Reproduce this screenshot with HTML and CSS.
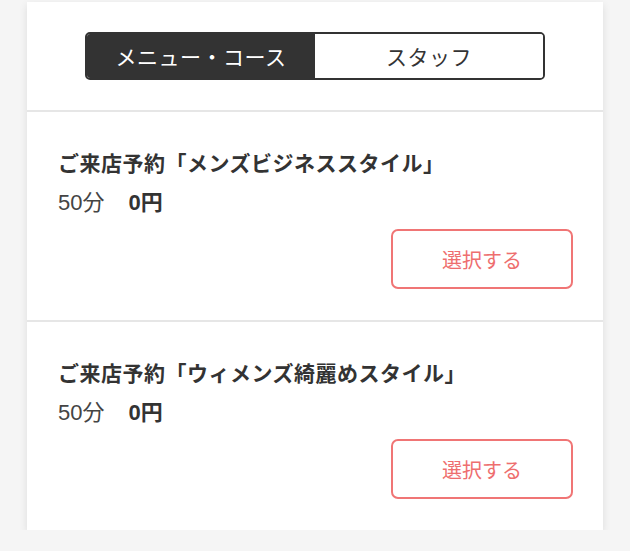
FILE: index.html
```html
<!DOCTYPE html>
<html lang="ja">
<head>
<meta charset="utf-8">
<link rel="stylesheet" href="styles.css">
</head>
<body>
<div class="card">
  <div class="tabs-wrap">
    <div class="tabs">
      <div class="tab active">メニュー・コース</div>
      <div class="tab">スタッフ</div>
    </div>
  </div>
  <div class="item">
    <div class="title">ご来店予約「メンズビジネススタイル」</div>
    <div class="price"><span class="time">50分</span><span class="yen">0円</span></div>
    <div class="actions"><button class="select">選択する</button></div>
  </div>
  <div class="item">
    <div class="title">ご来店予約「ウィメンズ綺麗めスタイル」</div>
    <div class="price"><span class="time">50分</span><span class="yen">0円</span></div>
    <div class="actions"><button class="select">選択する</button></div>
  </div>
</div>
</body>
</html>
```

FILE: styles.css
```css
* { box-sizing: border-box; }
html, body {
  margin: 0;
  padding: 0;
  background: #f5f5f5;
  font-family: "Noto Sans CJK JP", "Noto Sans", sans-serif;
  color: #333;
}
.card {
  width: 576px;
  margin: 2px 0 0 27px;
  background: #fff;
  box-shadow: 0 3px 8px rgba(0,0,0,0.10);
}
.tabs-wrap {
  padding: 30px 0 30px;
  display: flex;
  justify-content: center;
  border-bottom: 2px solid #e6e6e6;
}
.tabs {
  width: 460px;
  height: 48px;
  display: flex;
  border: 2px solid #333;
  border-radius: 5px;
  overflow: hidden;
}
.tab {
  flex: 1;
  display: flex;
  align-items: center;
  justify-content: center;
  font-size: 21px;
  letter-spacing: 0.5px;
  color: #333;
  background: #fff;
}
.tab.active {
  background: #333;
  color: #fff;
}
.item {
  padding: 35px 30px 31px 31px;
  border-bottom: 2px solid #e6e6e6;
}
.item:last-child { border-bottom: none; }
.title {
  font-size: 21px;
  letter-spacing: 0.5px;
  line-height: 30px;
  font-weight: bold;
  color: #333;
}
.price {
  margin-top: 11px;
  font-size: 22px;
  line-height: 30px;
  display: flex;
  gap: 24px;
}
.price span { font-family: "Liberation Sans", "Noto Sans CJK JP", sans-serif; }
.time { color: #444; }
.yen { font-weight: bold; color: #333; }
.actions {
  margin-top: 11px;
  display: flex;
  justify-content: flex-end;
}
.select {
  width: 182px;
  height: 60px;
  border: 2px solid #f07575;
  border-radius: 7px;
  background: #fff;
  color: #ee6e6e;
  font-family: "Noto Sans CJK JP", "Noto Sans", sans-serif;
  font-size: 20px;
  padding: 0;
}
```
